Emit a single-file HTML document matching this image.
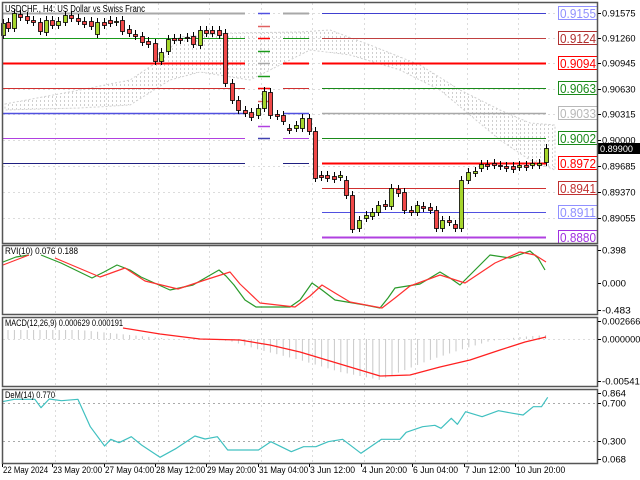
<!DOCTYPE html>
<html><head><meta charset="utf-8"><style>
html,body{margin:0;padding:0;background:#fff;width:640px;height:480px;overflow:hidden}
svg{display:block;font-family:"Liberation Sans",sans-serif}
</style></head><body>
<svg id="s" width="640" height="480" xmlns="http://www.w3.org/2000/svg">
<defs>
<pattern id="cl" width="4" height="4" patternUnits="userSpaceOnUse"><rect x="0" y="0" width="1" height="2" fill="#cfcfcf"/></pattern>
</defs>
<rect x="0" y="0" width="640" height="480" fill="#fff"/>
<g id="grid" stroke="#dcdcdc" stroke-dasharray="2,3" stroke-width="1"></g>
<polygon points="5,104 80,90 130,80 160,60 180,37 230,33 300,32 330,30 370,45 420,65 460,90 500,110 530,123 555,125 555,170 530,160 500,140 470,115 440,90 400,70 350,55 310,50 250,80 200,72 170,80 130,105 80,108 5,110" fill="url(#cl)" stroke="#d0d0d0" stroke-dasharray="2,2"/>
<g id="lv"></g>
<g id="cd"></g>
<g id="ind"></g>
<g fill="none" stroke="#555" stroke-width="1.5">
<rect x="2.5" y="2.5" width="595" height="241"/>
<rect x="2.5" y="245.5" width="595" height="69"/>
<rect x="2.5" y="317.5" width="595" height="69"/>
<rect x="2.5" y="389.5" width="595" height="74"/>
</g>
<g font-size="10" fill="#000">
<text x="5" y="12" textLength="140" lengthAdjust="spacingAndGlyphs">USDCHF., H4:  US Dollar vs Swiss Franc</text>
<text x="5" y="254" font-size="9" textLength="73" lengthAdjust="spacingAndGlyphs">RVI(10) 0.076 0.188</text>
<text x="5" y="326" font-size="9" textLength="118" lengthAdjust="spacingAndGlyphs">MACD(12,26,9) 0.000629 0.000191</text>
<text x="5" y="398" font-size="9" textLength="50" lengthAdjust="spacingAndGlyphs">DeM(14) 0.770</text>
</g>
<g font-size="9" fill="#000" id="ax"></g>
<g font-size="9" fill="#000" id="dt"></g>
</svg>
<script>
var NS="http://www.w3.org/2000/svg";
function el(p,t,a,txt){var e=document.createElementNS(NS,t);for(var k in a)e.setAttribute(k,a[k]);if(txt)e.textContent=txt;document.getElementById(p).appendChild(e);return e;}
var dx=[3,55,106,158,209,261,312,364,415,467,518];
dx.forEach(function(x){if(x>5){[[3,243],[246,314],[318,386],[390,463]].forEach(function(r){el('grid','line',{x1:x+.5,y1:r[0],x2:x+.5,y2:r[1]});});}});
[13,38,63,89,114,140,166,192,218].forEach(function(y){el('grid','line',{x1:3,y1:y+.5,x2:597,y2:y+.5});});
[403,441].forEach(function(y){el('grid','line',{x1:3,y1:y+.5,x2:597,y2:y+.5,stroke:'#aaa'});});
el('grid','line',{x1:3,y1:339.5,x2:597,y2:339.5});
var L=[[13,'#a8a8a8',2],[38,'#1a9a1a',1],[63,'#ff0000',2],[88,'#d03030',1],[113,'#5050e0',1.5],[138,'#b040e0',1],[163,'#202080',1]];
L.forEach(function(l){el('lv','line',{x1:2,y1:l[0]+.5,x2:245,y2:l[0]+.5,stroke:l[1],'stroke-width':l[2]});el('lv','line',{x1:283,y1:l[0]+.5,x2:309,y2:l[0]+.5,stroke:l[1],'stroke-width':l[2]});});
var S=[[13,'#5050e0'],[26,'#e06060'],[38,'#ff0000'],[51,'#1a9a1a'],[63,'#a8a8a8'],[76,'#1a9a1a'],[88,'#ff0000'],[101,'#e06060'],[126,'#b040e0'],[138,'#4040b0']];
S.forEach(function(l){el('lv','line',{x1:258,y1:l[0]+.5,x2:270,y2:l[0]+.5,stroke:l[1],'stroke-width':1.5});});
[[38,'#e06060'],[63,'#ff0000'],[88,'#1a9a1a'],[113,'#a8a8a8'],[138,'#1a9a1a'],[163,'#ff0000']].forEach(function(l){el('lv','line',{x1:322,y1:l[0]+.5,x2:330,y2:l[0]+.5,stroke:l[1]});});
var R=[[13,'#4040d0','#9090ff','0.9155',1],[38,'#c04040','#b03030','0.9124',1],[63,'#ff0000','#ff0000','0.9094',2],[88,'#1a8a1a','#1a8a1a','0.9063',1],[113,'#a8a8a8','#b8b8b8','0.9033',1.5],[138,'#1a8a1a','#1a8a1a','0.9002',1],[163,'#ff0000','#ff0000','0.8972',2],[188,'#d03030','#c03030','0.8941',1],[212,'#5050e0','#9090ff','0.8911',1],[237,'#b040e0','#a030e0','0.8880',2]];
R.forEach(function(l){el('lv','line',{x1:322,y1:l[0]+.5,x2:546,y2:l[0]+.5,stroke:l[1],'stroke-width':l[4]});
el('lv','rect',{x:558.5,y:l[0]-6.5,width:39,height:13,fill:'#fff',stroke:l[2]});
el('lv','text',{x:560,y:l[0]+5,fill:l[2],'font-size':'13',textLength:'36',lengthAdjust:'spacingAndGlyphs'},l[3]);});
var C=[[3,23,35,1],[8,22,28,0],[14,13,28,1],[20,14,17,0],[27,16,20,0],[33,20,22,0],[40,22,31,0],[46,20,32,1],[52,20,25,0],[58,21,25,1],[65,15,22,1],[71,15,18,0],[78,18,21,0],[84,21,24,0],[91,21,26,0],[97,22,34,1],[104,22,25,0],[110,20,23,0],[116,21,22,1],[122,20,31,0],[129,29,33,0],[135,34,36,0],[142,36,42,0],[148,41,44,0],[155,43,61,0],[161,52,61,1],[168,39,51,1],[174,38,40,0],[180,38,40,0],[187,37,38,0],[193,36,44,0],[200,30,45,1],[206,30,33,0],[212,30,33,0],[219,30,35,0],[225,33,83,0],[232,83,100,0],[238,100,110,0],[245,110,113,0],[251,112,117,0],[258,108,115,1],[264,91,108,1],[270,92,115,0],[277,114,116,0],[283,115,121,0],[289,128,130,0],[296,125,128,1],[302,118,128,1],[309,118,131,0],[315,131,178,0],[321,175,177,0],[327,175,178,0],[334,176,179,0],[340,175,177,1],[346,180,195,0],[352,195,229,0],[359,220,228,1],[366,215,218,1],[372,212,216,1],[378,205,212,1],[385,204,206,0],[391,188,206,1],[398,189,193,0],[404,192,210,0],[411,210,212,0],[417,205,212,1],[423,206,208,0],[430,207,210,0],[436,210,228,0],[442,220,228,1],[449,220,222,0],[455,224,228,0],[461,180,228,1],[468,172,180,1],[475,171,173,1],[481,164,168,1],[487,164,166,0],[494,163,165,0],[500,165,166,0],[506,166,168,0],[513,166,169,0],[519,165,167,1],[526,165,167,0],[532,163,165,1],[539,163,165,1],[546,148,162,1]];
C.forEach(function(c){var h=c[1]-4,lo=c[2]+4;el('cd','line',{x1:c[0]+.5,y1:h,x2:c[0]+.5,y2:lo,stroke:'#000'});
el('cd','rect',{x:c[0]-2+.5,y:c[1]+.5,width:4,height:Math.max(1,c[2]-c[1]),fill:c[3]?'#a6d62c':'#f04848',stroke:'#000','stroke-width':.8});});
el('lv','rect',{x:598,y:143,width:42,height:11,fill:'#000'});
el('lv','text',{x:600,y:152,fill:'#fff','font-size':'9',textLength:'33',lengthAdjust:'spacingAndGlyphs'},'0.89900');
[[13,'0.91575'],[38,'0.91260'],[63,'0.90945'],[89,'0.90630'],[114,'0.90315'],[140,'0.90000'],[166,'0.89685'],[192,'0.89370'],[218,'0.89055'],[250,'0.398'],[283,'0.000'],[310,'-0.483'],[321,'0.002666'],[339,'0.000000'],[381,'-0.005418'],[393,'0.864'],[403,'0.700'],[441,'0.300'],[459,'0.068']].forEach(function(a){
el('ax','line',{x1:598,y1:a[0]+.5,x2:601,y2:a[0]+.5,stroke:'#000'});el('ax','text',{x:602,y:a[0]+3.5,textLength:String(a[1].length*4.8),lengthAdjust:'spacingAndGlyphs'},a[1]);});
var D=['22 May 2024','23 May 20:00','27 May 04:00','28 May 12:00','29 May 20:00','31 May 04:00','3 Jun 12:00','4 Jun 20:00','6 Jun 04:00','7 Jun 12:00','10 Jun 20:00'];
D.forEach(function(d,i){var x=[2,52,104,155,206,258,309,361,412,464,515][i];el('dt','text',{x:x+1,y:473,textLength:String(d.length*4.1),lengthAdjust:'spacingAndGlyphs'},d);el('dt','line',{x1:x+.5,y1:464,x2:x+.5,y2:467,stroke:'#000'});});
function pl(pts,col,w){el('ind','polyline',{points:pts.map(function(p){return p[0]+','+p[1]}).join(' '),fill:'none',stroke:col,'stroke-width':w||1.2,'stroke-linejoin':'round'});}
pl([[3,262],[16,257],[29,255]],'#2a9a2a');pl([[41,255],[61,263],[92,278],[104,272],[117,265],[130,270],[141,277],[170,290],[193,285],[219,270],[226,276],[234,285],[245,300],[256,307],[290,307],[300,300],[312,283],[322,290],[335,300],[365,305],[380,308],[388,298],[395,288],[420,284],[440,272],[450,278],[460,285],[475,270],[490,255],[510,258],[530,251],[538,258],[545,270]],'#2a9a2a');
pl([[3,265],[29,255]],'#ff3030');pl([[55,258],[100,277],[125,268],[145,281],[178,289],[205,280],[230,272],[240,284],[260,303],[295,307],[310,296],[322,285],[335,293],[350,302],[382,308],[395,298],[410,286],[440,275],[465,283],[480,273],[495,263],[520,252],[535,255],[546,262]],'#ff3030');
function hv(x){var pts=[[3,330],[50,330],[80,330],[110,333],[140,336],[170,339],[200,339],[230,341],[260,350],[300,360],[340,372],[380,380],[400,372],[430,360],[460,350],[490,341],[520,337],[546,335]];for(var i=0;i<pts.length-1;i++){if(x>=pts[i][0]&&x<=pts[i+1][0]){var t=(x-pts[i][0])/(pts[i+1][0]-pts[i][0]);return pts[i][1]+t*(pts[i+1][1]-pts[i][1]);}}return 339;}
for(var x=8;x<=546;x+=6.4){el('ind','line',{x1:x,y1:339,x2:x,y2:hv(x),stroke:'#c8c8c8','stroke-width':1});}
pl([[123,328],[160,334],[200,339],[240,340],[270,345],[300,352],[340,364],[380,376],[410,375],[440,367],[470,360],[500,350],[525,342],[546,337]],'#ff2020');
var dm=[[5,485],[35,478],[85,478],[100,503],[120,477],[150,482],[190,478],[220,560],[255,618],[270,598],[290,608],[320,590],[345,615],[390,652],[430,625],[475,588],[500,597],[530,590],[555,630],[590,630],[630,630],[660,605],[710,635],[740,620],[770,620],[800,605],[835,598],[880,640],[930,598],[975,598],[990,577],[1030,560],[1060,556],[1075,565],[1100,535],[1115,553],[1135,515],[1175,530],[1215,512],[1250,520],[1275,525],[1300,500],[1320,500],[1335,472]];
pl(dm.map(function(p){return [(p[0]/2.4375).toFixed(1),(240+p[1]/3).toFixed(1)]}),'#40c0c0');
</script>
</body></html>
